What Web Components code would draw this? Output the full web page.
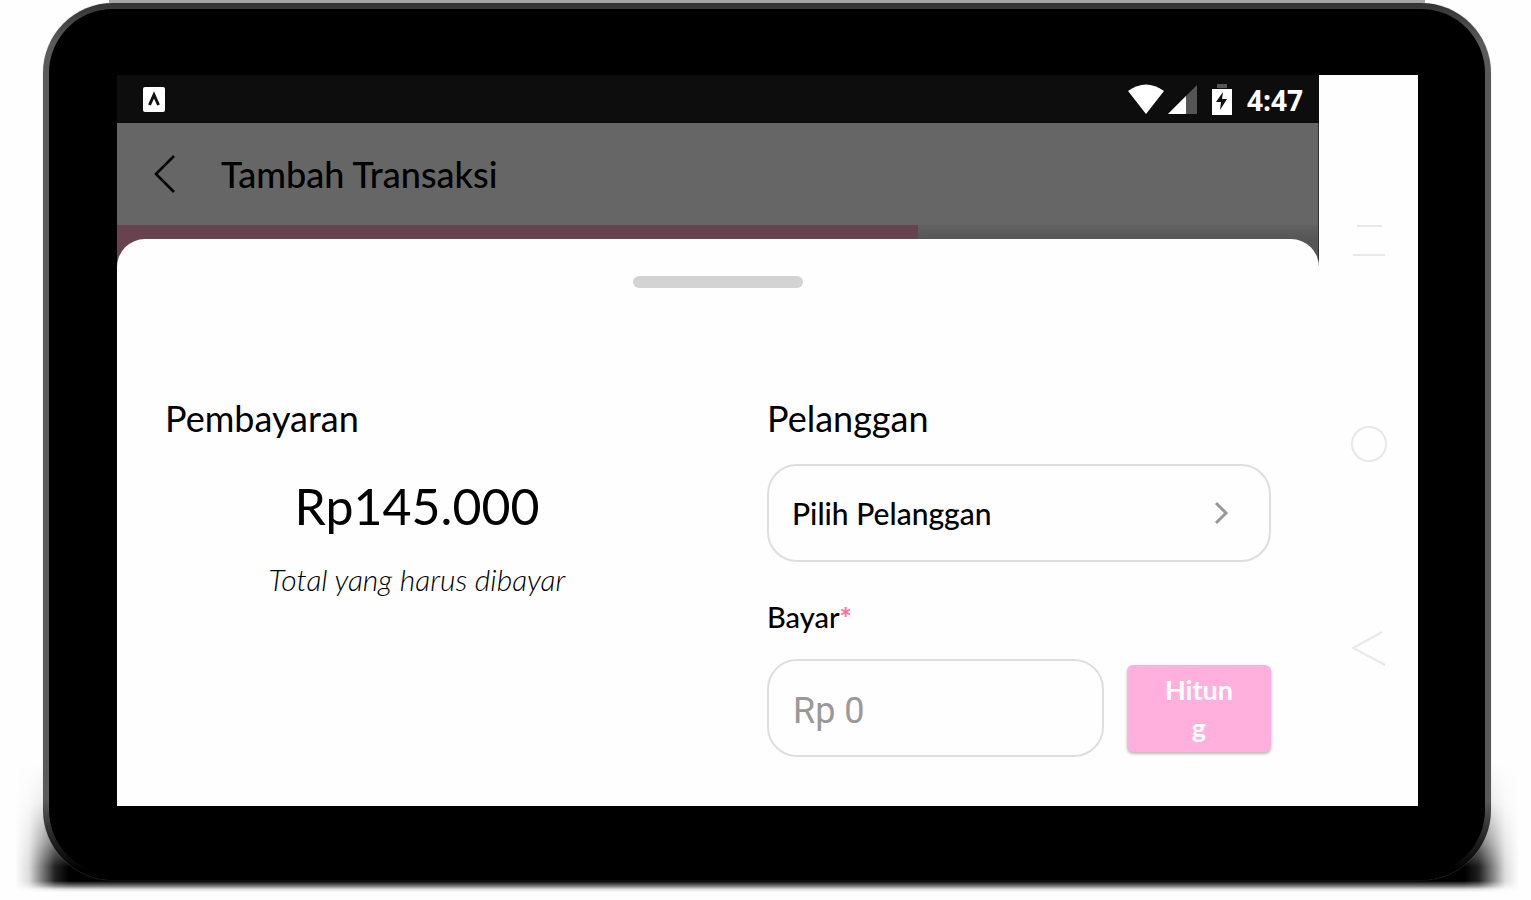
<!DOCTYPE html>
<html lang="id">
<head>
<meta charset="utf-8">
<meta name="viewport" content="width=device-width, initial-scale=1">
<title>Tambah Transaksi</title>
<style>
  body {
    margin: 0;
    padding: 0 40px 0 43px;
    background: #fefefe;
    color: #000;
    font-family: Lato, "Liberation Sans", sans-serif;
  }
</style>
</head>
<body>
<tablet-frame>
  <app-screen>
    <status-bar time="4:47"></status-bar>
    <app-header>Tambah Transaksi</app-header>
    <step-progress></step-progress>
    <bottom-sheet>
      <payment-total slot="left" amount="Rp145.000" note="Total yang harus dibayar">Pembayaran</payment-total>
      <payment-form slot="right"></payment-form>
    </bottom-sheet>
  </app-screen>
  <nav-buttons slot="nav"></nav-buttons>
</tablet-frame>

<script>
class TabletFrame extends HTMLElement {
  constructor() {
    super();
    this.attachShadow({ mode: "open" });
    this.shadowRoot.innerHTML = `
    <style>
    :host {
      display: block;
      position: relative;
      isolation: isolate;
      padding-bottom: 12px;
    }
    .edge {
      height: 3px;
      margin: 0 66px;
      background: #a6a6a6;
    }
    .shadow {
      position: absolute;
      z-index: -1;
      left: -28px;
      right: -28px;
      bottom: 0;
      height: 130px;
      background: linear-gradient(to right, transparent, #0002 14px, #0008 28px, #000d 40px, #000 54px, #000 calc(100% - 54px), #000d calc(100% - 40px), #0008 calc(100% - 28px), #0002 calc(100% - 14px), transparent);
      -webkit-mask-image: linear-gradient(transparent, #0002 40px, #0009 80px, #000 105px, #000 119px, #0008 124px, #0002 127px, transparent);
      mask-image: linear-gradient(transparent, #0002 40px, #0009 80px, #000 105px, #000 119px, #0008 124px, #0002 127px, transparent);
    }
    .frame {
      box-sizing: border-box;
      display: flex;
      padding: 66px 67px 68px 68px;
      border: 6px solid transparent;
      border-radius: 70px;
      background:
        linear-gradient(#000, #000) padding-box,
        linear-gradient(#333, #5a5a5a 40px, #5a5a5a calc(100% - 80px), #222 calc(100% - 40px), #000 calc(100% - 10px)) border-box;
      box-shadow: 0 0 1px #999;
    }
    .screen {
      flex: 1;
      min-width: 0;
      display: flex;
      background: #fefefe;
    }
    .main {
      flex: 1;
      min-width: 0;
    }
    </style>

    <div class="shadow"></div>
    <div class="edge"></div>
    <div class="frame">
      <div class="screen">
        <div class="main"><slot></slot></div>
        <slot name="nav"></slot>
      </div>
    </div>
    `;
  }
}

customElements.define("tablet-frame", TabletFrame);

class AppScreen extends HTMLElement {
  constructor() {
    super();
    this.attachShadow({ mode: "open" });
    this.shadowRoot.innerHTML = `
    <style>
    :host {
      display: block;
      background: #666;
    }
    </style>

    <slot></slot>
    `;
  }
}

customElements.define("app-screen", AppScreen);

class StatusBar extends HTMLElement {
  constructor() {
    super();
    this.attachShadow({ mode: "open" });
    this.shadowRoot.innerHTML = `
    <style>
    :host {
      display: flex;
      align-items: center;
      height: 48px;
      padding: 0 16px 0 26px;
      background: #0d0d0d;
      color: #fff;
      font: 700 28px/40px "Open Sans", sans-serif;
    }
    svg {
      display: block;
    }
    .wifi {
      margin-left: auto;
    }
    .signal {
      margin: 0 14px 0 4px;
    }
    .time {
      margin-left: 14px;
      padding-top: 2px;
    }
    </style>

    <svg width="22" height="26" viewBox="0 0 22 26">
      <rect y="1" width="22" height="25" rx="2" fill="#fff"/>
      <path d="M6.500 19 11 9l4.500 10" fill="none" stroke="#111" stroke-width="3"/>
      <path d="M9 20 11 15l2 5z" fill="#fff"/>
    </svg>
    <svg class="wifi" width="36" height="32" viewBox="0 0 36 32">
      <path d="M0 8Q18-5 36 8L18 31Z" fill="#fff"/>
    </svg>
    <svg class="signal" width="29" height="32" viewBox="0 0 29 32">
      <path d="M0 31 29 2V31Z" fill="#555"/>
      <path d="M0 31 18 13V31Z" fill="#fff"/>
    </svg>
    <svg width="22" height="32" viewBox="0 0 22 32">
      <path d="M6 1h10v4H6z" fill="#555"/>
      <path d="M1 6h20v26H1z" fill="#fff"/>
      <path d="M12 9 5 19h5L9 27l7-11h-5z" fill="#111"/>
    </svg>
    <span class="time"></span>
    `;
  }
  connectedCallback() {
    this.shadowRoot.querySelector(".time").textContent =
      this.getAttribute("time");
  }
}

customElements.define("status-bar", StatusBar);

class AppHeader extends HTMLElement {
  constructor() {
    super();
    this.attachShadow({ mode: "open" });
    this.shadowRoot.innerHTML = `
    <style>
    :host {
      display: flex;
      align-items: center;
      gap: 32px;
      height: 102px;
      padding-left: 24px;
      border-right: 1px solid #333;
    }
    button {
      padding: 0 12px;
      border: 0;
      background: none;
    }
    svg {
      display: block;
    }
    h1 {
      margin: 0;
      font-size: 36px;
      line-height: 48px;
      font-weight: 500;
    }
    </style>

    <button type="button" aria-label="Kembali">
      <svg width="24" height="40" viewBox="0 0 24 40">
        <path d="M21 2 3 20 21 38" fill="none" stroke="#000" stroke-width="2.600"/>
      </svg>
    </button>
    <h1><slot></slot></h1>
    `;
  }
}

customElements.define("app-header", AppHeader);

class StepProgress extends HTMLElement {
  constructor() {
    super();
    this.attachShadow({ mode: "open" });
    this.shadowRoot.innerHTML = `
    <style>
    :host {
      display: block;
      height: 42px;
      background: linear-gradient(#626262, #565656 14px);
      border-right: 1px solid #333;
    }
    .done {
      width: 66.7%;
      height: 100%;
      background: #66434f;
    }
    </style>

    <div class="done"></div>
    `;
  }
}

customElements.define("step-progress", StepProgress);

class BottomSheet extends HTMLElement {
  constructor() {
    super();
    this.attachShadow({ mode: "open" });
    this.shadowRoot.innerHTML = `
    <style>
    :host {
      display: block;
      position: relative;
      margin-top: -28px;
      padding: 37px 48px 49px;
      border-radius: 28px 28px 0 0;
      background: #fefefe;
    }
    .handle {
      width: 170px;
      height: 12px;
      margin: 0 auto 106px;
      border-radius: 6px;
      background: #d3d3d3;
    }
    .columns {
      display: grid;
      grid-template-columns: 1fr 1fr;
      gap: 98px;
    }
    </style>

    <div class="handle"></div>
    <div class="columns">
      <slot name="left"></slot>
      <slot name="right"></slot>
    </div>
    `;
  }
}

customElements.define("bottom-sheet", BottomSheet);

class PaymentTotal extends HTMLElement {
  constructor() {
    super();
    this.attachShadow({ mode: "open" });
    this.shadowRoot.innerHTML = `
    <style>
    :host {
      display: block;
    }
    h2 {
      margin: 0 0 32px;
      font-size: 36px;
      line-height: 48px;
      font-weight: 400;
    }
    p {
      margin: 0;
      text-align: center;
    }
    .amount {
      margin-bottom: 22px;
      font-size: 50px;
      line-height: 64px;
    }
    .note {
      font-size: 30px;
      line-height: 38px;
      font-style: italic;
      font-weight: 300;
    }
    </style>

    <h2><slot></slot></h2>
    <p class="amount"></p>
    <p class="note"></p>
    `;
  }
  connectedCallback() {
    this.shadowRoot.querySelector(".amount").textContent =
      this.getAttribute("amount");
    this.shadowRoot.querySelector(".note").textContent =
      this.getAttribute("note");
  }
}

customElements.define("payment-total", PaymentTotal);

class PaymentForm extends HTMLElement {
  constructor() {
    super();
    this.attachShadow({ mode: "open" });
    this.shadowRoot.innerHTML = `
    <style>
    :host {
      display: block;
    }
    h2 {
      margin: 0 0 22px;
      font-size: 36px;
      line-height: 48px;
      font-weight: 400;
    }
    .picker,
    input {
      box-sizing: border-box;
      width: 100%;
      height: 98px;
      padding: 0 24px;
      border: 2px solid #dedede;
      border-radius: 30px;
      background: #fefefe;
    }
    .picker {
      display: flex;
      align-items: center;
      justify-content: space-between;
      padding: 0 38px 0 23px;
      color: #000;
      font: 500 30px/38px Lato, sans-serif;
    }
    label {
      display: block;
      margin: 36px 0 23px;
      font-size: 29px;
      line-height: 38px;
      font-weight: 500;
    }
    .required {
      color: #ff72a4;
      font-weight: 900;
    }
    .row {
      display: grid;
      grid-template-columns: 1fr 144px;
      gap: 23px;
      align-items: center;
    }
    input {
      padding-top: 6px;
      font: 36px/48px Roboto, sans-serif;
    }
    input::placeholder {
      color: #999;
      opacity: 1;
    }
    .count {
      height: 87px;
      padding: 2px 36px 0;
      border: 0;
      border-radius: 6px;
      background: #ffb0dc;
      box-shadow: 0 2px 3px #0004;
      color: #fff;
      font: 700 27px/38px Lato, sans-serif;
      overflow-wrap: anywhere;
    }
    </style>

    <h2>Pelanggan</h2>
    <button class="picker" type="button">
      Pilih Pelanggan
      <svg width="18" height="26" viewBox="0 0 18 26">
        <path d="M3 3 13 13 3 23" fill="none" stroke="#999" stroke-width="3"/>
      </svg>
    </button>
    <label for="bayar">Bayar<span class="required">*</span></label>
    <div class="row">
      <input id="bayar" type="text" inputmode="numeric" placeholder="Rp 0" required>
      <button class="count" type="button">Hitung</button>
    </div>
    `;
  }
}

customElements.define("payment-form", PaymentForm);

class NavButtons extends HTMLElement {
  constructor() {
    super();
    this.attachShadow({ mode: "open" });
    this.shadowRoot.innerHTML = `
    <style>
    :host {
      display: flex;
      flex-direction: column;
      align-items: center;
      justify-content: center;
      gap: 168px;
      width: 99px;
      padding-top: 6px;
      box-sizing: border-box;
    }
    button {
      padding: 0;
      border: 0;
      background: none;
    }
    svg {
      display: block;
      fill: none;
      stroke: #e8e8e8;
      stroke-width: 2;
    }
    </style>

    <button type="button" aria-label="Aplikasi terbaru">
      <svg width="36" height="36" viewBox="0 0 36 36"><path d="M6 4H31M2 33H34"/></svg>
    </button>
    <button type="button" aria-label="Beranda">
      <svg width="36" height="36" viewBox="0 0 36 36"><circle cx="18" cy="18" r="17"/></svg>
    </button>
    <button type="button" aria-label="Kembali">
      <svg width="36" height="36" viewBox="0 0 36 36"><path d="M31 2 2 18 34 35"/></svg>
    </button>
    `;
  }
}

customElements.define("nav-buttons", NavButtons);
</script>
</body>
</html>
